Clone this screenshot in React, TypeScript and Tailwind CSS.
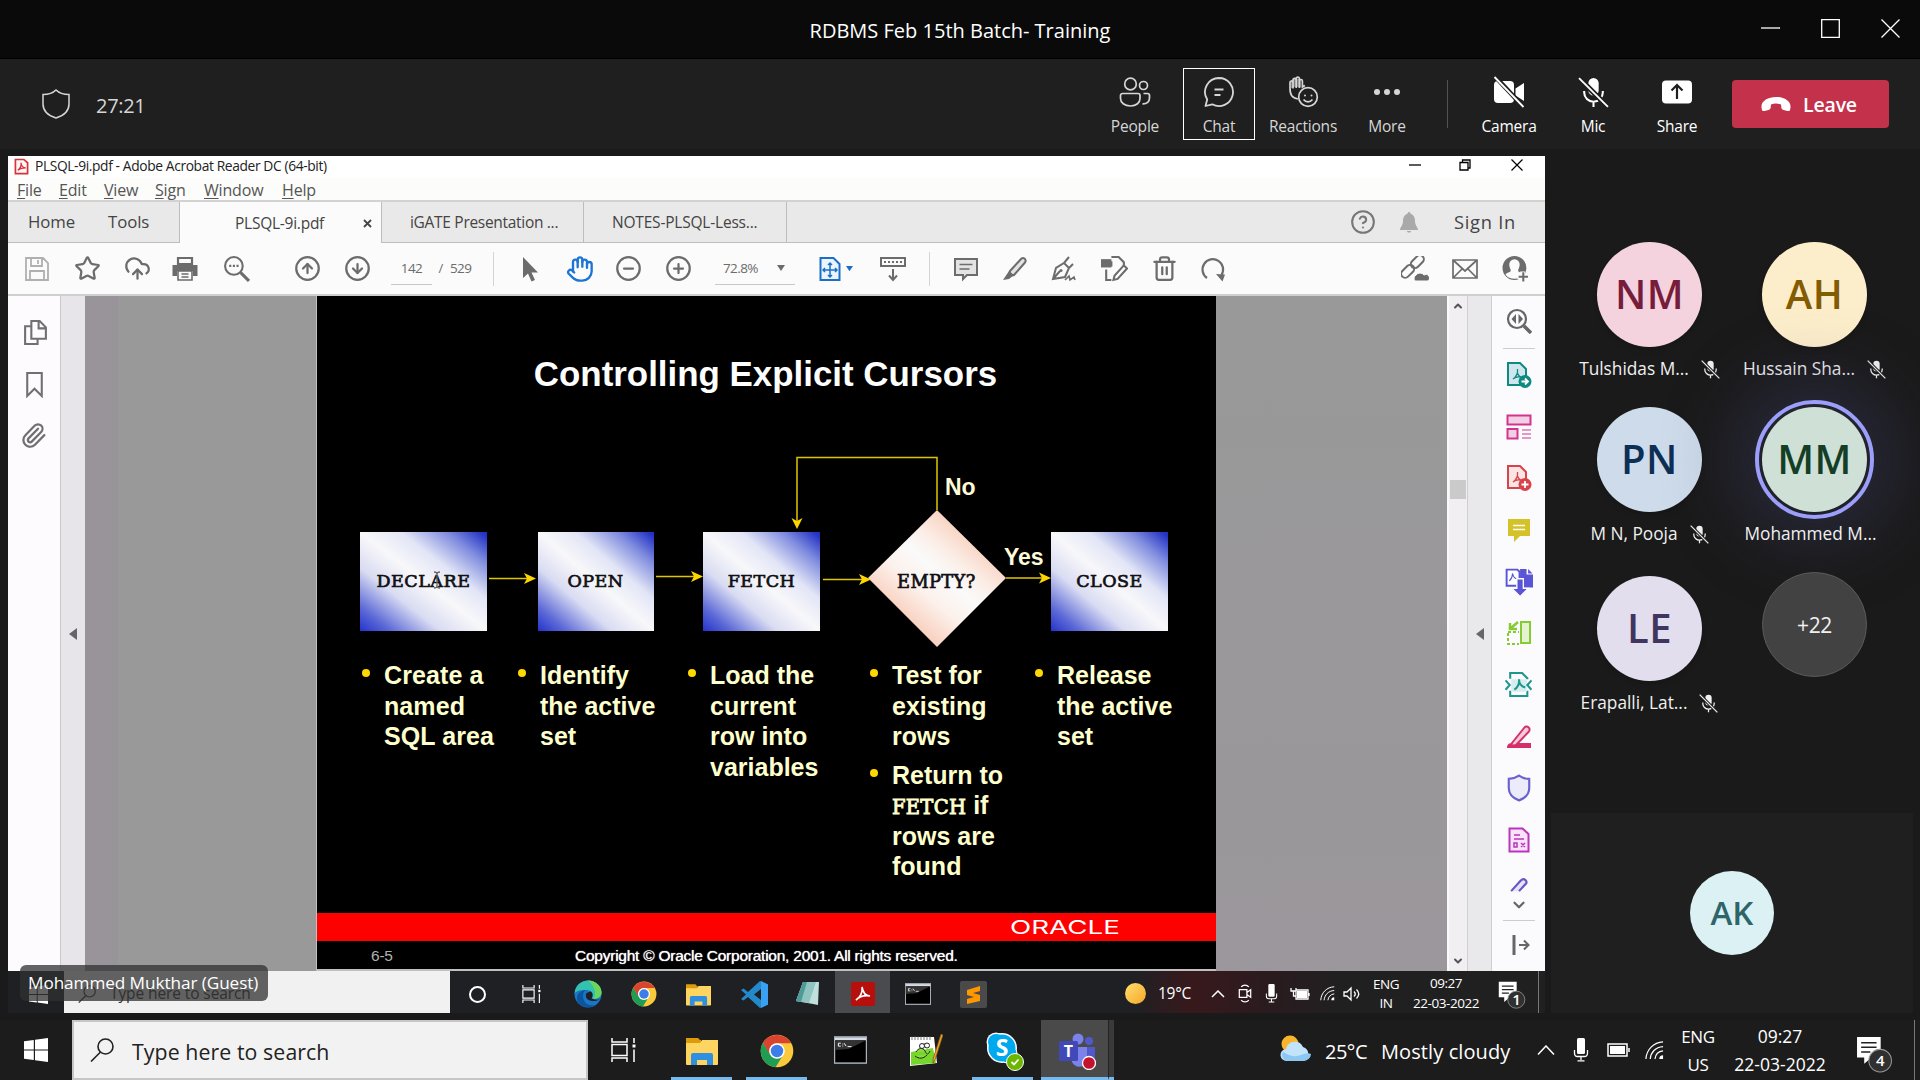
import React from "react";
import {
  Star, CloudUpload, CircleArrowUp, CircleArrowDown, CircleMinus, CirclePlus,
  Trash2, CircleQuestionMark, Paperclip, ChevronDown, ChevronUp, Hand,
} from "lucide-react";

type P = { children?: React.ReactNode; className?: string; vb?: string };
const Svg = ({ children, className = "", vb = "0 0 26 26" }: P) => (
  <svg viewBox={vb} fill="none" stroke="currentColor" strokeWidth={2} className={"shrink-0 " + className}>{children}</svg>
);

/* ---------- Meeting window ---------- */
const MicOff = ({ className = "" }: P) => (
  <Svg vb="0 0 30 30" className={className}>
    <rect x="10" y="1" width="10" height="17" rx="5" fill="currentColor" stroke="none" />
    <path d="M6 13.5v1.5a9 9 0 0 0 18 0v-1.5M15 24v5" strokeWidth="2" />
    <path d="M2 2l27 27" stroke="#1f1f1f" strokeWidth="5" />
    <path d="M1 1l28 28" strokeWidth="1.8" />
  </Svg>
);

const tools = [
  { label: "People", white: false, icon: (
    <Svg vb="0 0 32 30" className="h-[30px] w-8" >
      <circle cx="11.500" cy="7" r="5.800" strokeWidth="1.7" /><circle cx="24.500" cy="8.500" r="4" strokeWidth="1.7" />
      <path d="M3.500 16.500h15.500a2 2 0 0 1 2 2v3c0 4-3.500 7.500-9.500 7.500S1.500 25.500 1.500 21.500v-3a2 2 0 0 1 2-2zM24.500 16.500H28.500a2 2 0 0 1 2 2v2.500c0 3.500-2.500 6-7 5.800" strokeWidth="1.7" />
    </Svg>) },
  { label: "Chat", white: false, box: true, icon: (
    <Svg vb="0 0 32 32" className="h-8 w-8"><path d="M16 2a14 14 0 1 1-6.700 26.300L2.500 30l1.700-6.500A14 14 0 0 1 16 2zM11.500 13.500h9M11.500 19h6" strokeWidth="1.8" strokeLinejoin="round" /></Svg>) },
  { label: "Reactions", white: false, icon: (
    <Svg vb="0 0 32 32" className="h-8 w-8">
      <path d="M3 12V6.500a1.500 1.500 0 0 1 3 0V4a1.600 1.600 0 0 1 3.200 0V2.800a1.600 1.600 0 0 1 3.200 0V5a1.500 1.500 0 0 1 3 0v6l2.500-1.500M6 6.500v6M9.200 4v8M12.400 4v8M3 12c0 7 2 10 8 11" strokeWidth="1.7" />
      <path d="M4 4h3v8H4zM7 3h7v8H7z" fill="currentColor" fillOpacity="0.5" stroke="none" />
      <circle cx="21" cy="21" r="9.300" strokeWidth="1.7" /><circle cx="18" cy="19.500" r="1" fill="currentColor" stroke="none" /><circle cx="24.500" cy="19.500" r="1" fill="currentColor" stroke="none" />
      <path d="M16.500 23.500c2.500 3.200 6.500 3.200 9 0" strokeWidth="1.6" />
    </Svg>) },
  { label: "More", white: false, icon: (
    <Svg vb="0 0 32 32" className="h-8 w-8"><g fill="currentColor" stroke="none"><circle cx="6" cy="16" r="3" /><circle cx="16" cy="16" r="3" /><circle cx="26" cy="16" r="3" /></g></Svg>) },
];
const tools2 = [
  { label: "Camera", icon: (
    <Svg vb="0 0 32 32" className="h-8 w-8"><g fill="currentColor" stroke="none"><rect x="1" y="5" width="20" height="22" rx="4" /><path d="M22.500 12.500L31 7v18l-8.500-5.500z" /></g><path d="M2.500 1l28 30" stroke="#1f1f1f" strokeWidth="4.500" /><path d="M1.500 1l29 30" strokeWidth="1.800" /></Svg>) },
  { label: "Mic", icon: <MicOff className="size-[31px]" /> },
  { label: "Share", icon: (
    <Svg vb="0 0 32 32" className="h-8 w-8"><rect x="1" y="4.500" width="30" height="23" rx="4" fill="currentColor" stroke="none" /><path d="M16 23V9.500M10.500 14.500L16 9l5.500 5.500" stroke="#1f1f1f" strokeWidth="2.200" /></Svg>) },
];

const Tool = ({ label, icon, white, box }: { label: string; icon: React.ReactNode; white?: boolean; box?: boolean }) => (
  <div className="flex w-[84px] justify-center">
    <div className={"flex h-[72px] w-[72px] flex-col items-center border pt-[7px] " + (box ? "border-white " : "border-transparent ") + (white ? "text-white" : "text-[#d6d6d6]")}>
      <div className="flex h-8 items-center">{icon}</div>
      <div className="mt-[7px] text-[15.500px] leading-[22px] tracking-[-0.200px] whitespace-nowrap">{label}</div>
    </div>
  </div>
);

const Avatar = ({ text, cls }: { text: string; cls: string }) => (
  <div className={"flex size-[105px] items-center justify-center rounded-full pb-0.5 text-[40px] font-semibold tracking-[0.500px] shadow-md " + cls}>{text}</div>
);
const Person = ({ name, muted = true, children }: { name: string; muted?: boolean; children: React.ReactNode }) => (
  <div className="flex w-[165px] flex-col items-center">
    {children}
    <div className={"mt-[10px] flex h-6 items-center gap-3 text-[17.300px] whitespace-nowrap text-[#f0f0f0] " + (muted ? "" : "pr-2")}>
      <span>{name}</span>{muted && <MicOff className="size-[19px]" />}
    </div>
  </div>
);

/* ---------- App icons ---------- */
const Chrome = ({ className = "" }: P) => (
  <svg viewBox="0 0 48 48" className={className}>
    <circle cx="24" cy="24" r="23" fill="#fbc93c" />
    <path d="M4.100 12.500A23 23 0 0 0 22 47L33 29 24 24 15 29z" fill="#1f9d55" />
    <path d="M4.100 12.500A23 23 0 0 1 43.900 13H24a11 11 0 0 0-9.500 16.500z" fill="#d9432f" />
    <circle cx="24" cy="24" r="11" fill="#fff" /><circle cx="24" cy="24" r="8.800" fill="#3d7de8" />
  </svg>
);
const Folder = ({ className = "" }: P) => (
  <svg viewBox="0 0 32 32" className={className}>
    <path d="M0 3h12l2 2h1v6H0z" fill="#dd9a0b" /><path d="M0 8h14l2-3h16v24a1 1 0 0 1-1 1H1a1 1 0 0 1-1-1z" fill="#ffd562" />
    <path d="M5 30V20a2 2 0 0 1 2-2h18a2 2 0 0 1 2 2v10h-6v-5H11v5z" fill="#2f8fe0" />
  </svg>
);
const Cmd = ({ className = "" }: P) => (
  <svg viewBox="0 0 34 28" className={className}>
    <rect x="0.500" y="0.500" width="33" height="27" fill="#000" stroke="#aab3bb" strokeWidth="1.500" /><rect x="1" y="1" width="32" height="3" fill="#d5dde6" />
    <path d="M1 4h32L15 13 1 14z" fill="#333" /><path d="M7 7H4.500v3H7M9 7.500v.8M9 9.500v.8M10.500 7l2 3M14 10.500h4" stroke="#fff" fill="none" />
  </svg>
);
const WinLogo = ({ className = "" }: P) => (
  <svg viewBox="0 0 24 24" fill="currentColor" className={className}><path d="M0 3.300L9.800 2v9.400H0zM11 1.800L24 0v11.400H11zM0 12.600h9.800V22L0 20.700zM11 12.600h13V24L11 22.200z" /></svg>
);
const TaskView = ({ className = "" }: P) => (
  <Svg vb="0 0 25 24" className={className}><path d="M1 0v4h15V0M1 24v-4h15v4M1 6.500h15v11H1zM23 0v5M23 11.500V24" strokeWidth="1.500" /><path d="M21.500 6.500h3v3h-3z" fill="currentColor" stroke="none" /></Svg>
);
const Search = ({ className = "" }: P) => (
  <Svg vb="0 0 24 24" className={className}><circle cx="15.500" cy="8.500" r="7.500" strokeWidth="1.600" /><path d="M10.500 14L1 23.500" strokeWidth="1.600" /></Svg>
);
const MicSolid = ({ className = "" }: P) => (
  <Svg vb="0 0 16 24" className={className}><rect x="4" y="0" width="8" height="16" rx="1.500" fill="currentColor" stroke="none" /><path d="M1.500 12v3c0 2 1 3.500 3 3.500h7c2 0 3-1.500 3-3.500v-3M8 18v4M4.500 22.800h7" strokeWidth="1.300" /></Svg>
);
const Wifi = ({ className = "" }: P) => (
  <Svg vb="0 0 20 20" className={className}><path d="M1 19C1.500 9 9 1.500 19 1M5.500 19C6 12 11 6.500 19 6M10.500 19c.5-4.500 3.500-8 8.500-8.500" strokeWidth="1.300" /><path d="M15 19a4 4 0 0 1 4-4v4z" fill="currentColor" stroke="none" /></Svg>
);
const Note = ({ n, className = "" }: { n: string; className?: string }) => (
  <div className={"relative shrink-0 " + className}>
    <svg viewBox="0 0 36 36" className="size-full"><path d="M1 1h23v20H15l-7 6v-6H1z" fill="#fff" /><path d="M5 6.500h15M5 11h15M5 15.500h9" stroke="#222" strokeWidth="1.500" /><circle cx="23.500" cy="24" r="11" fill="#303030" stroke="#999" /></svg>
    <span className="absolute top-[38%] left-[36%] flex h-[58%] w-[60%] items-center justify-center text-[15px] font-semibold text-white">{n}</span>
  </div>
);

/* ---------- Acrobat ---------- */
const PdfSwirl = () => <path d="M7 17c3-2 5-6 4.500-10M11.500 11c1 3 3 4.500 5.500 4.500M7 17c3-2.500 6-2.500 9-1.500" strokeWidth="1.300" />;
const side: React.ReactNode[] = [
  <Svg className="size-[26px] text-[#0f8a80]"><path d="M2 1h12l6 6v16H2z" fill="#cfe6ef" /><PdfSwirl /><circle cx="19" cy="19.500" r="6.500" fill="currentColor" stroke="none" /><path d="M15.500 19.500h6M19 16.500l3 3-3 3" stroke="#fff" strokeWidth="1.800" /></Svg>,
  <Svg className="size-[26px] text-[#d3358d]"><rect x="1.500" y="1.500" width="23" height="9" fill="#f3cfe6" /><rect x="1.500" y="15" width="10" height="9.500" fill="#f3cfe6" /><path d="M16 16h9M16 20h9M16 24h9" strokeWidth="1.200" /></Svg>,
  <Svg className="size-[26px] text-[#d8434b]"><path d="M2 1h12l6 6v16H2z" fill="#fbe4e4" /><PdfSwirl /><circle cx="19" cy="19.500" r="6.500" fill="currentColor" stroke="none" /><path d="M15.500 19.500h7M19 16v7" stroke="#fff" strokeWidth="1.800" /></Svg>,
  <Svg className="size-[26px] text-[#d4c228]"><path d="M2 2h22v17H14l-6 6v-6H2z" fill="currentColor" stroke="none" /><path d="M7 8.500h12M7 12.500h12" stroke="#fff" strokeWidth="1.500" /></Svg>,
  <Svg className="size-[28px] text-[#5a55d6]"><path d="M14 1h6v5h6v12H14z" fill="currentColor" stroke="none" /><path d="M21.500 1l4 4h-4z" fill="currentColor" stroke="none" /><path d="M1.500 1.500h10l2 2v13h-12z" fill="#fff" strokeWidth="1.800" /><path d="M4 12c2-2 3-4 3-7 1 4 2 5 5 5" strokeWidth="1" /><path d="M11 10h6v9h4.500L14 26.500 6.500 19H11z" fill="currentColor" stroke="#fff" strokeWidth="1.200" /></Svg>,
  <Svg className="size-[26px] text-[#86cb34]"><rect x="15" y="2" width="9" height="21" fill="#e6f3d3" /><path d="M2 13v11h11" strokeDasharray="3 2" /><path d="M2 12h11" strokeDasharray="3 2" /><path d="M12 2L5 8M4 3v6h7" strokeWidth="2.500" /></Svg>,
  <Svg className="size-[27px] text-[#1f968d]"><path d="M5 7.500V2h11.500l5 5v1M5 19v5h16.500v-5" /><path d="M6 8h15v12H6z" fill="#d5edf0" stroke="none" /><path d="M9 18c3-2 5-6 4.500-10 0 5 2 7 6 8M0.500 9l4 4.500-4 4.500M25.500 9l-4 4.500 4 4.500" /></Svg>,
  <Svg className="size-[26px] text-[#d32f6b]"><path d="M1 24c0-4 2-5 6-5h18v5z" fill="currentColor" stroke="none" /><path d="M6 19L18 4c1.500-1.800 3-2 4.500-.7s1.500 3 0 4.700L10 21l-5 1z" fill="#f5c9da" /></Svg>,
  <Svg className="size-[28px] text-[#6a62cf]"><path d="M13 1.500c3 2 6 3 9.500 3V13c0 6-4 9.500-9.500 11.500C7.500 22.500 3.500 19 3.500 13V4.500c3.500 0 6.500-1 9.500-3z" fill="#ecebfa" /></Svg>,
  <Svg className="size-[26px] text-[#bb35bd]"><path d="M3.500 1.500h13l6 5.500v17.500h-19z" fill="#f8e3f8" /><path d="M8 8h6M8 12h10" strokeWidth="1.500" /><path d="M8 16h3v4H8zM15 16l4 4m0-4l-4 4" strokeWidth="1.500" /></Svg>,
];
const Row = ({ c, children }: { c: string; children: React.ReactNode }) => <div className={"flex w-[26px] shrink-0 justify-center " + c}>{children}</div>;
const I = { className: "size-[27px] shrink-0", strokeWidth: 2 };

const MenuWord = ({ w, c }: { w: string; c: string }) => (
  <span className={c}><span className="underline underline-offset-2">{w[0]}</span>{w.slice(1)}</span>
);

const Toolbar = () => (
  <div className="flex h-[53px] items-center border-b-2 border-[#cfcfcf] bg-[#fbfbfb] text-[#6c6c6c]">
    <Row c="ml-4"><Svg className="size-[26px] text-[#b0b0b0]"><path d="M2 2h17l5 5v17H2zM7 2v8h11V2M6 24v-9h14v9M14 4v4" strokeWidth="1.800" /></Svg></Row>
    <Row c="ml-6"><Star {...I} /></Row>
    <Row c="ml-6"><CloudUpload {...I} /></Row>
    <Row c="ml-[22px]"><Svg className="size-[26px]"><path d="M6 2h14v6H6z" strokeWidth="2.200" /><path d="M0.500 9h25v11H21v-5H5v5H.5z" fill="currentColor" stroke="none" /><path d="M6 15h14v9H6zM9.500 18h7M9.500 21h7" strokeWidth="1.600" /></Svg></Row>
    <Row c="ml-[25px]"><Svg className="size-[27px]"><circle cx="10.500" cy="10.500" r="8.500" /><path d="M17 17l8 8" strokeWidth="3" /><path d="M6 10.500h9.500" strokeDasharray="2 1.500" /></Svg></Row>
    <Row c="ml-[45px]"><CircleArrowUp {...I} /></Row>
    <Row c="ml-6"><CircleArrowDown {...I} /></Row>
    <div className="ml-[21px] flex h-8 w-[41px] items-center justify-center border-b border-[#c8c8c8] text-[13.500px] tracking-[-0.600px]">142</div>
    <div className="w-[18px] text-center text-[13px]">/</div>
    <div className="w-[23px] text-[13.500px] tracking-[-0.600px]">529</div>
    <div className="ml-5 h-[34px] w-px bg-[#d4d4d4]" />
    <Row c="ml-[23px]"><Svg className="size-[26px]"><path d="M6 1v21l5-4.500 3.500 8 3.500-1.500-3.500-7.500H21z" fill="currentColor" stroke="none" /></Svg></Row>
    <Row c="ml-6"><Hand className="size-[28px] shrink-0 text-[#1c74d4]" strokeWidth={2} /></Row>
    <Row c="ml-[22px]"><CircleMinus {...I} /></Row>
    <Row c="ml-6"><CirclePlus {...I} /></Row>
    <div className="ml-6 flex h-8 w-20 items-center justify-between border-b border-[#c8c8c8] pr-2.5 pl-2 text-[13.500px] tracking-[-0.600px]">72.8%<Svg vb="0 0 8 6" className="w-2"><path d="M0 0h8L4 6z" fill="currentColor" stroke="none" /></Svg></div>
    <Row c="ml-[22px]"><Svg className="size-[26px] text-[#1c6fc4]"><path d="M3.500 2h13l6 6v16h-19z" fill="#eaf4ff" /><path d="M13 7v14M6 14h14M11 9l2-2 2 2M11 19l2 2 2-2M8 12l-2 2 2 2M18 12l2 2-2 2" strokeWidth="1.500" /></Svg></Row>
    <Svg vb="0 0 8 6" className="ml-[3px] w-[7px] text-[#1c6fc4]"><path d="M0 0h8L4 6z" fill="currentColor" stroke="none" /></Svg>
    <Row c="ml-[27px]"><Svg className="size-[26px]"><rect x="1" y="2" width="24" height="8" /><path d="M4 6h18" strokeDasharray="2 2" /><path d="M13 13v10M9 19.500l4 4.500 4-4.500" /></Svg></Row>
    <div className="ml-[23px] h-[34px] w-px bg-[#d4d4d4]" />
    <Row c="ml-[23px]"><Svg className="size-[26px]"><path d="M2 3h22v16H14l-4 4v-4H2z" fill="#e3e3e3" /><path d="M6.500 8.500h13M6.500 13h10" strokeWidth="1.600" /></Svg></Row>
    <Row c="ml-[23px]"><Svg className="size-[26px]"><path d="M8 15L19 3c1.500-1.500 3-1.500 4 0s.8 2.500 0 3.500L12 19l-5 1z" fill="#e3e3e3" /><path d="M7 15L1 24l6-1 5-4z" fill="currentColor" stroke="none" /></Svg></Row>
    <Row c="ml-[23px]"><Svg className="size-[26px]"><path d="M2 23L5 12l8-5 5 5-4 9zM2 23l7-8M13 7l5-6M18 12l4-4" /><circle cx="10" cy="14.500" r="1.500" fill="currentColor" stroke="none" /><path d="M14 24l4-4 1 4 4-3 1 3" strokeWidth="1.600" /></Svg></Row>
    <Row c="ml-6"><Svg className="size-[27px]"><path d="M10 2h7l5 5v5M5 14v10h5M10 6v5" /><rect x="0" y="4" width="10" height="8" fill="currentColor" stroke="none" /><path d="M13 20l9-10 3 3-9 10-4 1z" fill="#fff" /></Svg></Row>
    <Row c="ml-6"><Trash2 {...I} /></Row>
    <Row c="ml-[23px]"><Svg className="size-[26px]"><path d="M7 22A10.300 10.300 0 1 1 21.500 19" strokeWidth="2.200" /><path d="M16 18l9 .5-2.500 7z" fill="currentColor" stroke="none" /></Svg></Row>
    <Row c="ml-auto"><Svg vb="0 0 28 26" className="h-[26px] w-7"><rect x="9" y="2" width="15" height="8" rx="4" transform="rotate(-45 16 6)" /><rect x="-1" y="11" width="15" height="8" rx="4" transform="rotate(-45 7 15)" /><path d="M14 25a4 4 0 0 1 1-6 5 5 0 0 1 8 0 3.500 3.500 0 0 1 4 6z" fill="currentColor" stroke="#fbfbfb" strokeWidth="1" /></Svg></Row>
    <Row c="ml-6"><Svg className="size-[26px]"><path d="M1 4h24v18H1zM1 4l12 11L25 4M1 22l9-9M25 22l-9-9" strokeWidth="1.700" /></Svg></Row>
    <Row c="mr-[17px] ml-6"><Svg className="size-[27px]"><circle cx="12" cy="12.500" r="11.500" fill="currentColor" stroke="none" /><path d="M12 4a5 5 0 0 1 5 5c0 3-1 4-1.500 6 0 2 5 2 5 4-3 5-14 5-17 0 0-2 5-2 5-4C8 13 7 12 7 9a5 5 0 0 1 5-5z" fill="#fbfbfb" stroke="none" /><path d="M20 16v10M15 21h10" stroke="#fbfbfb" strokeWidth="5" /><path d="M20.500 16.500v9M16 21h9" /></Svg></Row>
  </div>
);

const mono = "font-['DejaVu_Serif',serif] text-[#101014] [-webkit-text-stroke:0.700px_#101014]";
const box = "absolute top-[138px] flex h-[99px] items-center justify-center bg-[linear-gradient(to_top_right,#2433cc_0%,#5b68d6_12%,#d9dcf2_32%,#f8f8fa_50%,#e2e5f6_66%,#7f8cde_84%,#2232c4_98%)] text-[17.500px] tracking-[0.500px] " + mono;
const Bullet = ({ children, c }: { children: React.ReactNode; c: string }) => (
  <li className={"flex " + c}><span className="mt-[9px] mr-[14px] size-2 shrink-0 rounded-full bg-[#ffd800]" /><span className="whitespace-nowrap">{children}</span></li>
);
const Slide = () => (
  <div className="flex h-[675px] w-[900px] shrink-0 flex-col border-b-2 border-l border-[#c0c0c0] bg-black font-['Liberation_Sans',Arial,sans-serif] text-white">
    <div className="mt-[58px] h-10 pr-0.5 text-center text-[34.900px] leading-10 font-bold">Controlling Explicit Cursors</div>
    <div className="relative h-[266px] shrink-0">
      <div className={box + " left-[43px] w-[127px]"}>DECLARE</div>
      <div className={box + " left-[220.500px] w-[116px]"}>OPEN</div>
      <div className={box + " left-[386px] w-[117px]"}>FETCH</div>
      <div className={box + " left-[734px] w-[117px]"}>CLOSE</div>
      <svg viewBox="0 0 898 267" className="absolute top-0 left-px h-[267px] w-[898px]" fill="none">
        <defs><linearGradient id="peach" x1="0.200" y1="0.850" x2="0.800" y2="0.150"><stop offset="0" stopColor="#f8c4ae" /><stop offset="0.350" stopColor="#fcf1ec" /><stop offset="0.550" stopColor="#fafafa" /><stop offset="0.700" stopColor="#fbefe8" /><stop offset="1" stopColor="#f8c9b4" /></linearGradient></defs>
        <path d="M619 116L688 184 619 253 550 184z" fill="url(#peach)" />
        <g stroke="#e0c400" strokeWidth="1.500"><path d="M619 116V63.500H479V128M171 184.500h40M338 182.500h40M505 185.500h40M688 184h40" /></g>
        <g fill="#ffd500"><path d="M473.500 124l5.500 3 5.500-3-5.500 11z" /><path d="M206 179l3 5.500-3 5.500 12-5.500zM373 177l3 5.500-3 5.500 12-5.500zM541 180l3 5.500-3 5.500 12-5.500zM721 178.500l3 5.500-3 5.500 12-5.500z" /></g>
        <g stroke="#666" strokeWidth="1.300"><path d="M116 178c2 0 3 1 3 2v12c0 1-1 2-3 2M122 178c-2 0-3 1-3 2v12c0 1 1 2 3 2" /></g>
      </svg>
      <span className={"absolute top-[176px] left-[580px] text-[17.800px] leading-6 tracking-[0.400px] " + mono}>EMPTY?</span>
      <span className="absolute top-[79px] left-[628px] text-[23px] leading-7 font-bold text-[#fffbd8]">No</span>
      <span className="absolute top-[149px] left-[687px] text-[23px] leading-7 font-bold text-[#fffbd8]">Yes</span>
    </div>
    <div className="flex h-[253px] pl-[45px] text-[25px] leading-[30.500px] font-bold text-[#ffffce]">
      <ul className="w-[156px] tracking-[0.100px]"><Bullet c="">Create a<br />named<br />SQL area</Bullet></ul>
      <ul className="w-[170px]"><Bullet c="">Identify<br />the active<br />set</Bullet></ul>
      <ul className="w-[182px]"><Bullet c="">Load the<br />current<br />row into<br />variables</Bullet></ul>
      <ul className="w-[165px]">
        <Bullet c="mb-2">Test for<br />existing<br />rows</Bullet>
        <Bullet c="">Return to<br /><span className="font-['DejaVu_Serif',serif] text-[19.500px] leading-5 font-normal tracking-[0.300px] [-webkit-text-stroke:0.900px_#ffffce]">FETCH</span> if<br />rows are<br />found</Bullet>
      </ul>
      <ul><Bullet c="">Release<br />the active<br />set</Bullet></ul>
    </div>
    <div className="flex h-7 shrink-0 items-center bg-[#fe0000] pt-px pl-[693px]"><span className="origin-left scale-x-[1.460] font-['Inter',sans-serif] text-[19px] leading-none">ORACLE</span></div>
    <div className="flex h-[28px] items-center pt-0.5 pl-[54px] text-[15.500px] tracking-[-0.240px]"><span className="w-[204px] text-[#b0b0b0]">6-5</span><span className="whitespace-nowrap [text-shadow:0_0_1px_#fff]">Copyright © Oracle Corporation, 2001. All rights reserved.</span></div>
  </div>
);

const Acrobat = () => (
  <div className="flex h-[815px] flex-col bg-white text-[#333]">
    <div className="flex h-[22px] items-center pb-0.5 pl-1.5">
      <Svg vb="0 0 16 18" className="h-[17px] w-[15px] text-[#d8323c]"><path d="M1.500 1.500h9L14.500 5v11.500h-13z" fill="#fff5f5" strokeWidth="1.800" /><path d="M4 13c2-1.500 4-5 3.500-8 .5 4 2 5.500 5 5.500-3 0-6 .5-8.500 2.500z" strokeWidth="1.400" /></Svg>
      <span className="ml-1.5 text-[13.800px] tracking-[-0.380px] text-[#222]">PLSQL-9i.pdf - Adobe Acrobat Reader DC (64-bit)</span>
      <Svg vb="0 0 12 12" className="mb-0.5 ml-auto h-3 w-3 text-black"><path d="M0 6h12" strokeWidth="1.300" /></Svg>
      <Svg vb="0 0 12 12" className="mb-0.5 ml-[38px] h-3 w-3 text-black"><path d="M1 3.500h8V11H1zM3.500 3.500V1H11v8H9" strokeWidth="1.300" /></Svg>
      <Svg vb="0 0 12 12" className="mr-[22px] mb-0.5 ml-10 h-3 w-3 text-black"><path d="M.5.5l11 11M11.500.5l-11 11" strokeWidth="1.200" /></Svg>
    </div>
    <div className="flex h-[22px] items-center bg-[#fcfcfa] pt-0.5 pl-[9px] text-[16px] leading-5 tracking-[-0.180px] text-[#555]">
      <MenuWord w="File" c="w-[42px]" /><MenuWord w="Edit" c="w-[45px]" /><MenuWord w="View" c="w-[51px]" /><MenuWord w="Sign" c="w-[49px]" /><MenuWord w="Window" c="w-[78px]" /><MenuWord w="Help" c="" />
    </div>
    <div className="flex h-[43px] shrink-0 items-center border-t-2 border-[#d2d2d2] bg-[#e9e9e9] text-[15.500px] tracking-[-0.250px] whitespace-nowrap text-[#444]">
      <div className="flex h-full w-[172px] items-center border-r border-b border-[#bdbdbd] pl-5 text-[16.800px] tracking-[-0.100px]"><span className="w-[80px]">Home</span><span>Tools</span></div>
      <div className="flex h-full w-[202px] items-center border-r border-[#bdbdbd] bg-[#fbfbfb] pt-0.5 pl-[55px]"><span className="w-[128px]">PLSQL-9i.pdf</span><Svg vb="0 0 9 9" className="w-[9px]"><path d="M1 1l7 7M8 1L1 8" strokeWidth="1.800" /></Svg></div>
      <div className="flex h-full w-[202px] items-center border-r border-b border-[#bdbdbd] pt-0.5 pl-[28px] tracking-[-0.300px]">iGATE Presentation ...</div>
      <div className="flex h-full w-[203px] items-center border-r border-b border-[#bdbdbd] pt-0.5 pl-7 tracking-[-0.200px]">NOTES-PLSQL-Less...</div>
      <div className="flex h-full flex-1 items-center justify-end border-b border-[#bdbdbd] pr-[29px]">
        <CircleQuestionMark className="size-[26px] text-[#777]" strokeWidth={1.9} />
        <Svg vb="0 0 18 21" className="mx-[24px] h-[21px] w-[18px] text-[#a9a9a9]"><path d="M9 0c1 0 1.500.8 1.500 1.800C14 3 15 6 15 9c0 5 3 6 3 9H0c0-3 3-4 3-9 0-3 1-6 4.500-7.200C7.500.8 8 0 9 0zM7 19h4c0 2-4 2-4 0z" fill="currentColor" stroke="none" /></Svg>
        <span className="ml-[12px] text-[18.300px] font-medium tracking-[0.750px]">Sign In</span>
      </div>
    </div>
    <Toolbar />
    <div className="flex h-[675px] shrink-0">
      <div className="flex w-[53px] flex-col items-center border-r border-[#c9c9cc] bg-[#fdfbfd] pt-[23px] text-[#707070]">
        <Svg className="ml-0.5 size-[27px]"><path d="M9 2h8l6 6v11H9zM16 2v7h7M9 7H3v17h12v-5" /></Svg>
        <Svg className="mt-[25px] size-[27px]"><path d="M6 2h14v22l-7-7-7 7z" /></Svg>
        <Paperclip className="mt-6 mr-0.5 size-[27px]" strokeWidth={2} />
      </div>
      <div className="flex w-6 items-center justify-center bg-[#e7e5e9] text-[#666]"><Svg vb="0 0 8 12" className="h-3 w-2"><path d="M8 0v12L0 6z" fill="currentColor" stroke="none" /></Svg></div>
      <div className="w-[33px] bg-[#98949a]" /><div className="w-[198px] bg-[#999]" />
      <Slide />
      <div className="flex-1 bg-linear-to-b from-[#999] to-[#9b979c]" />
      <div className="flex w-5 flex-col items-center border-l-2 border-[#fafafa] bg-[#f1eff2] pt-1 text-[#555]"><ChevronUp className="size-3" strokeWidth={4} /><div className="mt-[168px] h-[19px] w-4 bg-[#cacaca]" /><ChevronDown className="mt-auto mb-1 size-3" strokeWidth={4} /></div>
      <div className="flex w-[25px] items-center justify-center border-x border-[#cfcfcf] bg-[#e9e8ea] text-[#666]"><Svg vb="0 0 8 12" className="h-3 w-2"><path d="M8 0v12L0 6z" fill="currentColor" stroke="none" /></Svg></div>
      <div className="flex w-[53px] flex-col items-center bg-[#fbfafc] pt-3 text-[#666]">
        <Svg className="size-[26px]"><circle cx="11" cy="11" r="9" strokeWidth="2.200" /><path d="M18 18l7 7" strokeWidth="3.500" /><path d="M10 6v10L5.500 11zM12.500 6v10l4.500-5z" fill="currentColor" stroke="none" /></Svg>
        <div className="mt-3.5 h-px w-8 bg-[#ccc]" />
        {side.map((s, i) => <div key={i} className="flex h-[51.700px] shrink-0 items-center">{s}</div>)}
        <Svg vb="0 0 22 16" className="mt-[12px] h-3.5 w-5 text-[#6a55c4]"><path d="M2 15L13 3c2-2 4-2 5.500-.500s1.500 3 0 4.500L11 15" fill="#e6e2fa" strokeWidth="2.500" /></Svg>
        <ChevronDown className="mt-[4px] size-[18px] shrink-0" strokeWidth={3} />
        <div className="mt-[6px] h-px w-8 bg-[#ccc]" />
        <Svg vb="0 0 18 20" className="mt-[14px] ml-1 h-5 w-[18px]"><path d="M2 0v20" strokeWidth="3" /><path d="M7 10h9M12 5.500l4.500 4.500-4.500 4.500" /></Svg>
      </div>
    </div>
  </div>
);

const C = ({ c = "w-[55px]", children }: { c?: string; children?: React.ReactNode }) => <div className={"flex h-full shrink-0 items-center justify-center " + c}>{children}</div>;

const InnerTaskbar = () => (
  <div className="flex h-[42px] items-center bg-[linear-gradient(to_right,#1e2024_0%,#1e2024_73%,#38191c_77%,#2a1b1f_82%,#202020_87%)] text-white">
    <C c="w-14 pt-1"><WinLogo className="ml-1 size-[19px]" /></C>
    <div className="flex h-full w-[386px] items-center bg-[#f1f1f1] pt-1 pl-3.5 text-[#333]"><Search className="size-[18px]" /><span className="ml-[14px] text-[15.500px] tracking-[-0.100px]">Type here to search</span></div>
    <C c="w-[54px] pt-1"><div className="size-[17px] rounded-full border-[2.500px] border-white" /></C>
    <C c="w-[54px] pt-1"><TaskView className="h-[18px] w-[19px]" /></C>
    <C c="w-[59px] pt-1"><svg viewBox="0 0 28 28" className="size-[28px]"><circle cx="14" cy="14" r="13.500" fill="#1976c8" /><path d="M.5 14C1 4 9 .5 14 .5c8 0 13.500 6 13.500 12 0 5-5 7.500-10 6 3-3 1-8-4-8.500C7 9.500 1 11 .5 14z" fill="#35c1b0" /><path d="M14 .5c8 0 13.500 6 13.500 12 0 4-4 6.500-8 6.200 4-6 0-14-5.500-18.200z" fill="#6bd65a" /><path d="M9 16c0 7 6 10.500 12 9-7 5-17 1-18-6-.5-5 4-9 9-9-2 1-3 3-3 6z" fill="#0c559c" /><path d="M12.500 13a5 5 0 0 0 2 7c4 2 9 1 11.500-1-2 1-5 1-8.500-.500 2-3 1-6-1-7z" fill="#1e2024" /></svg></C>
    <C c="w-[53px] pt-1"><Chrome className="size-[26px]" /></C>
    <C c="w-[57px] pt-1"><Folder className="size-[25px]" /></C>
    <C c="w-[54px] pt-1"><svg viewBox="0 0 27 27" className="size-[27px]"><path d="M19 0l8 3.500v20L19 27 7 16l-4.500 3.500L0 18l5-4.500L0 9l2.500-1.500L7 11zM20 8l-7 5.500 7 5.500z" fill="#2489ca" fillRule="evenodd" /><path d="M20 0l7 3.500v20L20 27z" fill="#3aa0f3" /></svg></C>
    <C c="w-[54px] pt-1"><svg viewBox="0 0 26 26" className="size-[26px]"><path d="M8 1h16l-1 23-5-1L1 20z" fill="#bfe0dc" /><path d="M8 1h13L14 22 1 20z" fill="#8fc4c0" /><path d="M8 1h4L6 21 1 20z" fill="#4e9a96" /></svg></C>
    <C c="w-[55px] bg-[#4a4b4e] pt-1"><svg viewBox="0 0 24 24" className="size-[24px]"><rect width="24" height="24" rx="2" fill="#b70f0c" /><path d="M5 18c4-2 7-8 6-13 1 6 3 9 8 9-6-1-10 0-14 4z" fill="none" stroke="#fff" strokeWidth="1.700" /></svg></C>
    <C c="w-[55px] pt-1"><Cmd className="h-[22px] w-[26px]" /></C>
    <C c="w-[57px] pt-1"><svg viewBox="0 0 27 27" className="size-[27px]"><rect width="27" height="27" rx="2" fill="#4a4a4a" /><path d="M20 5v5l-7 2 7 2v6L7 23v-5l7-2-7-2V9z" fill="#ff9800" /></svg></C>
    <div className="flex h-full flex-1 items-center pt-[3px] pl-[123px]">
      <div className="size-[21px] shrink-0 rounded-full bg-linear-to-br from-[#ffdf6b] to-[#f5a623]" />
      <span className="ml-3 w-[53px] text-[15.500px] tracking-[-0.300px]">19°C</span>
      <Svg vb="0 0 14 8" className="w-3.5"><path d="M1 7l6-6 6 6" strokeWidth="1.500" /></Svg>
      <Svg vb="0 0 16 20" className="ml-3 h-[19px] w-4"><path d="M4 3c2-2.500 6-2.500 8 0M4 17c2 2.500 6 2.500 8 0M2 6h8v8H2zM10 9l4-3v8l-4-3" strokeWidth="1.300" /></Svg>
      <MicSolid className="ml-3 h-[19px] w-[13px]" />
      <Svg vb="0 0 20 14" className="ml-3 h-3.5 w-5"><path d="M6 3h12v9H6zM19 6v3M1 1v3h5V1M3.500 4v5h3" strokeWidth="1.300" /><path d="M8 5h8v5H8z" fill="currentColor" /></Svg>
      <Wifi className="ml-[10px] size-[15px]" />
      <Svg vb="0 0 18 16" className="ml-2 h-4 w-[18px]"><path d="M1 6h3l4-4v12l-4-4H1zM11 5.500c1.500 1.500 1.500 3.500 0 5M13.500 3.500c3 3 3 6 0 9" strokeWidth="1.300" /></Svg>
      <div className="ml-[9px] w-8 text-center text-[13.500px] leading-[18.500px] tracking-[-0.500px]">ENG<br />IN</div>
      <div className="ml-[6px] w-[76px] text-center text-[13.500px] leading-[19.500px] tracking-[-0.450px] whitespace-nowrap">09:27<br />22-03-2022</div>
      <Note n="1" className="mt-0.5 ml-[14px] size-[28px]" />
    </div>
    <div className="h-full w-[7px] border-l border-[#777]" />
  </div>
);

const Taskbar = () => (
  <div className="flex h-[60px] items-center bg-[#1c1c1c] text-white">
    <C c="w-[72px]"><WinLogo className="size-6" /></C>
    <div className="flex h-full w-[516px] items-center border-2 border-[#c6c6c6] bg-[#f2f2f2] pl-4 text-[#222]"><Search className="size-6" /><span className="ml-[18px] pt-1 text-[21.300px] tracking-[0.080px]">Type here to search</span></div>
    <C c="w-[71px]"><TaskView className="h-6 w-[25px]" /></C>
    <C c="ml-3 w-[61px] border-b-[3px] border-[#76b9ed]"><Folder className="mt-1 size-8" /></C>
    <C c="ml-3.5 w-[61px] border-b-[3px] border-[#76b9ed]"><Chrome className="mt-1 size-[34px]" /></C>
    <C c="ml-3 w-[62px]"><Cmd className="h-7 w-[33px]" /></C>
    <C c="ml-3 w-[66px]"><svg viewBox="0 0 34 34" className="mt-0.5 size-[34px]"><path d="M1 3h24l3 26-27 3z" fill="#fff" /><path d="M2 18l22-4 3 15-25 2z" fill="#77d62c" /><path d="M3 2v4M6 2v4M9 2v4M12 2v4M15 2v4M18 2v4M21 2v4" stroke="#555" strokeWidth=".8" /><path d="M7 18c2-4 7-5 9-1s3 4 5 0M11 14c2-4 5-5 8-3M6 22c4 3 8 3 12-1" fill="#8be03a" stroke="#222" /><circle cx="13" cy="12" r="2.500" fill="#fff" stroke="#222" /><circle cx="18" cy="11.500" r="2.500" fill="#fff" stroke="#222" /><path d="M32 0l2 1-8 25-2 3v-4z" fill="#f2a324" stroke="#75511b" strokeWidth=".7" /></svg></C>
    <C c="ml-[13px] w-[61px] border-b-[3px] border-[#76b9ed]">
      <svg viewBox="0 0 38 38" className="mt-1 ml-1 size-[38px] overflow-visible"><circle cx="10" cy="10" r="9.500" fill="#fff" /><circle cx="22" cy="22" r="9.500" fill="#fff" /><circle cx="16" cy="16" r="15" fill="#fff" /><circle cx="10" cy="10" r="8" fill="#00a9ee" /><circle cx="22" cy="22" r="8.500" fill="#00a9ee" /><circle cx="16" cy="16" r="13.500" fill="#00a9ee" /><text x="16" y="24" fontSize="23" fontWeight="700" fill="#fff" stroke="none" textAnchor="middle" fontFamily="Open Sans">S</text><circle cx="29" cy="30" r="8.500" fill="#6bb700" stroke="#fff" /><path d="M25.500 30l2.500 2.500 4.500-5" stroke="#fff" strokeWidth="1.800" fill="none" /></svg>
    </C>
    <C c="ml-2 w-[67px] border-b-[3px] border-[#76b9ed] bg-[#4a4a4a]">
      <svg viewBox="0 0 38 38" className="mt-1 ml-1 size-[38px]"><circle cx="20" cy="7" r="5.500" fill="#7b83eb" /><circle cx="31" cy="9" r="4" fill="#5059c9" /><path d="M26 15h11v10c0 4-5 6-9 4z" fill="#5059c9" /><path d="M13 15h16v13c0 8-12 9-15 2z" fill="#7b83eb" /><rect x="1" y="9" width="19" height="20" rx="1.500" fill="#4149b8" /><text x="10.500" y="25" fontSize="16" fontWeight="700" fill="#fff" textAnchor="middle" fontFamily="Open Sans">T</text><circle cx="31" cy="31" r="6.500" fill="#c4112c" stroke="#fff" strokeWidth="1.300" /></svg>
    </C>
    <C c="w-1.5 border-b-[3px] border-l border-b-[#76b9ed] border-l-[#222] bg-[#3a3a3a]" />
    <svg viewBox="0 0 32 32" className="ml-[166px] size-8 shrink-0"><circle cx="10" cy="10" r="8.500" fill="#f8b62d" /><path d="M7 27a6 6 0 0 1-1-12 9 9 0 0 1 17-2 7.500 7.500 0 0 1 1 14z" fill="#c2e3fa" /><path d="M7 27a6 6 0 0 1-4-9c4 2 8 5 14 4s10-4 14-2a7.500 7.500 0 0 1-7 7z" fill="#8cc8f2" /></svg>
    <span className="ml-[13px] w-[56px] pt-1 text-[20px] tracking-[-0.500px]">25°C</span>
    <span className="w-[156px] pt-1 text-[20px] tracking-[0.100px] whitespace-nowrap">Mostly cloudy</span>
    <Svg vb="0 0 18 10" className="w-[18px]"><path d="M1 9.500L9 1l8 8.500" strokeWidth="1.500" /></Svg>
    <MicSolid className="ml-[18px] h-6 w-4" />
    <Svg vb="0 0 23 14" className="ml-[18px] h-3.5 w-[23px]"><path d="M1 1h19v12H1zM22 5v4" strokeWidth="1.500" /><path d="M4 4h13v6H4z" fill="currentColor" /></Svg>
    <Wifi className="ml-[15px] size-[19px]" />
    <div className="ml-[14px] w-10 pt-0.5 text-center text-[17px] leading-[28px] tracking-[-0.300px]">ENG<br />US</div>
    <div className="ml-[14px] w-[96px] text-center text-[17.500px] leading-[28px] whitespace-nowrap">09:27<br />22-03-2022</div>
    <Note n="4" className="mt-2 ml-[28px] size-[37px]" />
    <div className="ml-auto h-full w-1.5 border-l border-[#777]" />
  </div>
);

export default function App() {
  return (
    <div className="h-[1080px] w-[1920px] overflow-hidden bg-[#1a1a1a] font-['Open_Sans','Noto_Sans',sans-serif]">
      <div className="flex h-[59px] items-center border-b border-black bg-[#0a0a0a] text-white">
        <div className="w-[200px]" />
        <div className="flex-1 pt-[3px] text-center text-[20px]">RDBMS Feb 15th Batch- Training</div>
        <div className="flex w-[200px] items-center justify-end gap-[41px] pr-5 pb-0.5">
          <Svg vb="0 0 19 19" className="size-[19px]"><path d="M0 9h19" strokeWidth="1.300" /></Svg>
          <Svg vb="0 0 19 19" className="size-[19px]"><path d="M.7.7h17.600v17.600H.7z" strokeWidth="1.300" /></Svg>
          <Svg vb="0 0 19 19" className="size-[19px]"><path d="M.5.5l18 18M18.500.5l-18 18" strokeWidth="1.300" /></Svg>
        </div>
      </div>
      <div className="flex h-[90px] items-center bg-[#1f1f1f] text-[#d6d6d6]">
        <Svg vb="0 0 28 30" className="ml-[42px] h-[30px] w-7"><path d="M14 1c3 3 7.500 4.500 13 4.500V15c0 7-5 11.500-13 14C6 26.500 1 22 1 15V5.500C6.500 5.500 11 4 14 1z" strokeWidth="1.500" /></Svg>
        <span className="ml-[26px] pt-[3px] text-[20px] tracking-[-0.300px]">27:21</span>
        <div className="ml-auto flex">{tools.map((t) => <Tool key={t.label} {...t} />)}</div>
        <div className="mr-[19px] ml-[18px] h-12 w-px bg-[#525252]" />
        <div className="flex">{tools2.map((t) => <Tool key={t.label} {...t} white />)}</div>
        <div className="mr-[31px] ml-[13px] flex h-12 w-[157px] items-center justify-center gap-3 rounded bg-[#c4314b] pr-[3px] text-white">
          <Svg vb="0 0 30 16" className="h-4 w-[30px]"><path d="M15 1c8 0 15 4 14.500 10-.2 3.500-1 4.500-3 4l-4-1c-1.500-.5-2-1-2.200-3L20 8.500c-3-1.200-7-1.200-10 0L9.700 11c-.2 2-.7 2.500-2.200 3l-4 1c-2 .5-2.800-.5-3-4C0 5 7 1 15 1z" fill="currentColor" stroke="none" /></Svg>
          <span className="pt-0.5 text-[19.500px] font-semibold tracking-[-0.200px]">Leave</span>
        </div>
      </div>
      <div className="flex h-[871px]">
        <div className="relative mt-[7px] ml-2 h-[857px] w-[1537px]">
          <Acrobat />
          <InnerTaskbar />
          <div className="absolute top-[809px] left-3 flex h-9 w-[248px] items-center rounded-md bg-[#303030]/75 pl-2 text-[17.200px] tracking-[-0.080px] whitespace-nowrap text-white">Mohammed Mukthar (Guest)</div>
        </div>
        <div className="ml-1.5 flex w-[369px] flex-col">
          <div className="flex h-[664px] flex-col pt-[93px] pl-4">
            <div className="flex h-[165px]">
              <Person name="Tulshidas M..."><Avatar text="NM" cls="bg-[#f5d3de] text-[#751d3b]" /></Person>
              <Person name="Hussain Sha..."><Avatar text="AH" cls="bg-[#fdeecb] text-[#835b00]" /></Person>
            </div>
            <div className="flex h-[169px]">
              <Person name="M N, Pooja"><Avatar text="PN" cls="bg-[#cddbea] text-[#0d2f56]" /></Person>
              <Person name="Mohammed M..." muted={false}>
                <div className="rounded-full shadow-[0_0_70px_30px_rgba(70,70,120,0.350)] outline-4 outline-offset-[3px] outline-[#9b9ffa]"><Avatar text="MM" cls="bg-[#cfe1d6] text-[#143f26]" /></div>
              </Person>
            </div>
            <div className="flex">
              <Person name="Erapalli, Lat..."><Avatar text="LE" cls="bg-[#e2deed] text-[#40355f]" /></Person>
              <div className="-mt-1 flex w-[165px] justify-center"><div className="flex size-[105px] items-center justify-center rounded-full border border-[#5a5a5a] bg-[#424242] pt-[3px] text-[21px] tracking-[-0.300px] text-[#f0f0f0]">+22</div></div>
            </div>
          </div>
          <div className="flex h-[200px] w-[362px] items-center justify-center bg-[#1f1f1f]"><div className="flex size-[84px] items-center justify-center rounded-full bg-[#dcf1f4] pb-px text-[33px] font-semibold text-[#2d6569]">AK</div></div>
        </div>
      </div>
      <Taskbar />
    </div>
  );
}
